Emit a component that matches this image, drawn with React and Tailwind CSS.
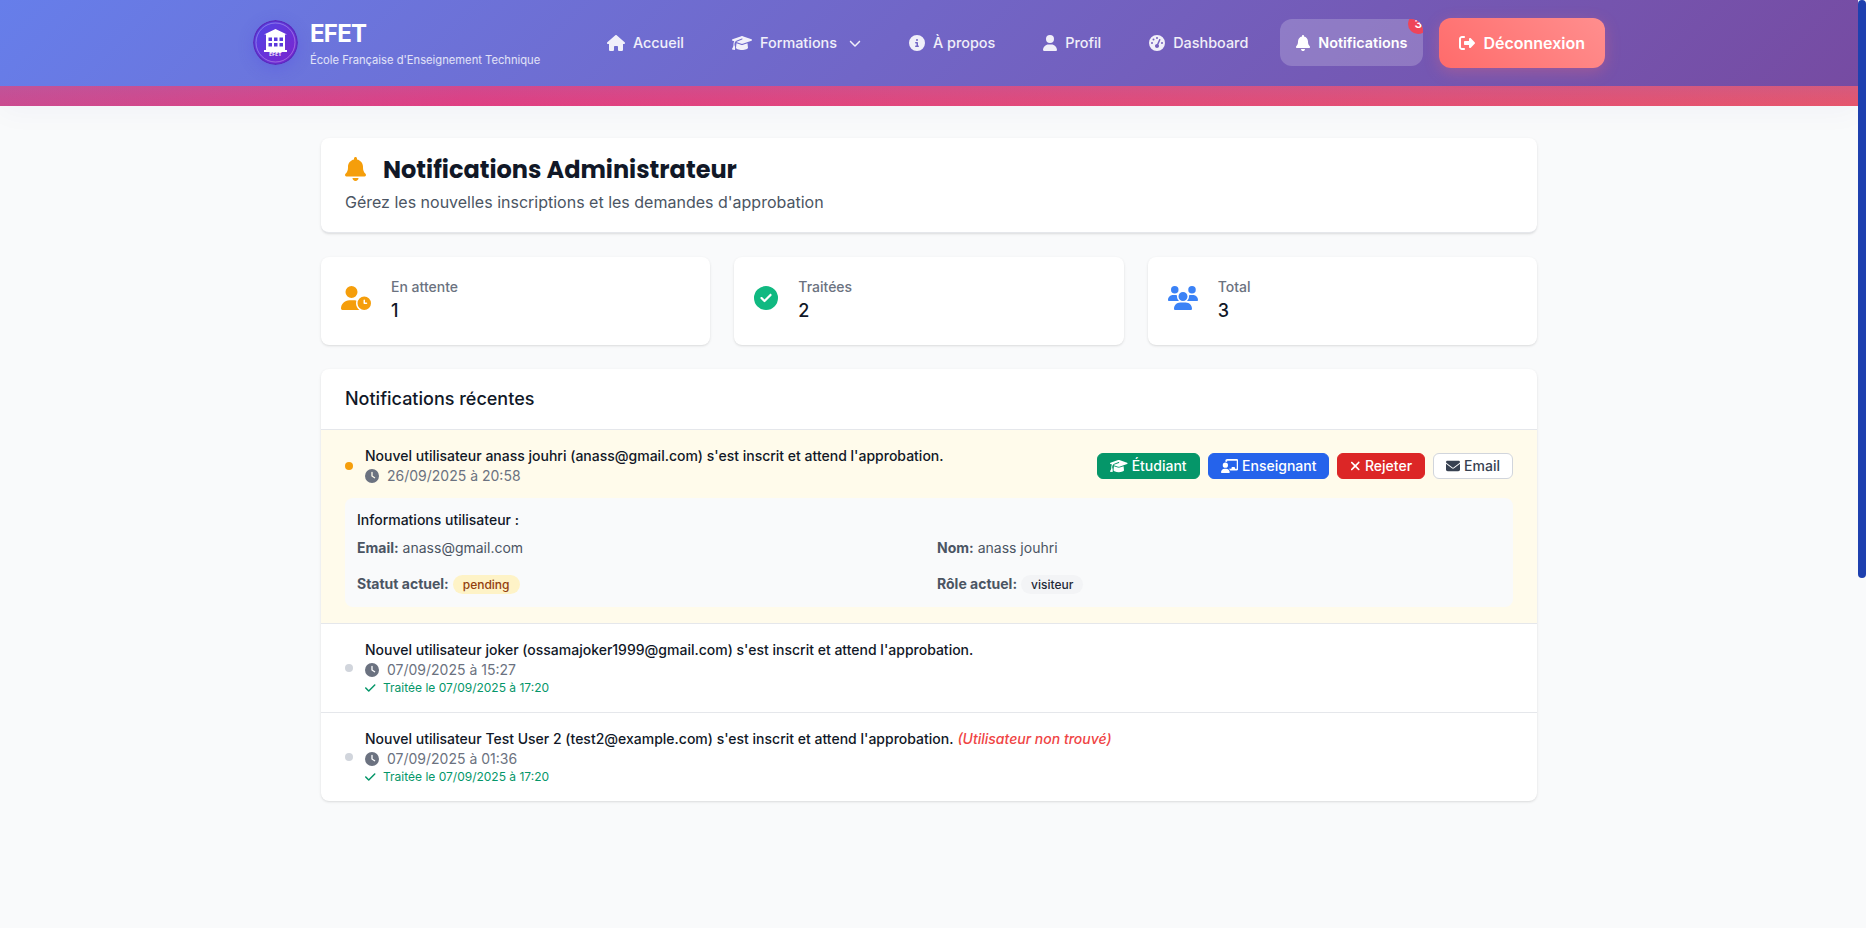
import {
  FaHouse, FaGraduationCap, FaCircleInfo, FaUser, FaBell, FaRightFromBracket,
  FaUserClock, FaCircleCheck, FaUsers, FaClock, FaCheck, FaXmark, FaEnvelope, FaChevronDown,
  FaChalkboardUser, FaGaugeHigh,
} from "react-icons/fa6";

function Logo() {
  return (
    <svg className="mb-px size-[45px] rounded-full shadow-[0_4px_15px_rgba(79,70,229,0.3)]" viewBox="0 0 45 45">
      <defs>
        <linearGradient id="lg" x1="0" y1="0" x2="1" y2="1">
          <stop offset="0" stopColor="#4f46e5" />
          <stop offset="1" stopColor="#7e22ce" />
        </linearGradient>
      </defs>
      <circle cx="22.5" cy="22.5" r="22.5" fill="#5b2bc0" />
      <circle cx="22.5" cy="22.5" r="21" fill="url(#lg)" />
      <circle cx="22.5" cy="22.5" r="19.5" fill="none" stroke="#fff" strokeOpacity=".3" strokeWidth="1" />
      <path fill="#fff" d="M22.5 9 L34 14.5 H32 V30 H34 V32 H11 V30 H13 V14.5 H11 Z" />
      <g fill="#5b39dc">
        <rect x="15.5" y="17.5" width="3.5" height="3.5" />
        <rect x="21" y="17.5" width="3.5" height="3.5" />
        <rect x="26.5" y="17.5" width="3.5" height="3.5" />
        <rect x="15.5" y="23" width="3.5" height="3.5" />
        <rect x="21" y="23" width="3.5" height="3.5" />
        <rect x="26.5" y="23" width="3.5" height="3.5" />
      </g>
      <text x="22.5" y="36.2" textAnchor="middle" fontSize="5" fontWeight="700" fill="#fff">EFET</text>
    </svg>
  );
}

function NavItem({ icon: Icon, size = "w-4", children, chevron }) {
  return (
    <a className="flex h-[47px] items-center gap-2 px-4 text-[14.4px] font-medium text-white/90">
      <Icon className={`h-4 shrink-0 ${size}`} />
      <span>{children}</span>
      {chevron && <FaChevronDown className="ml-1 size-3" />}
    </a>
  );
}

function Stat({ icon: Icon, color, label, value }) {
  return (
    <div className="flex h-22 items-center gap-5 rounded-lg bg-white px-5 shadow-sm">
      <Icon className={`mb-1.5 h-6 shrink-0 ${color}`} />
      <div>
        <div className="text-sm leading-5 font-medium text-[#6b7280]">{label}</div>
        <div className="text-lg leading-7 font-medium text-[#111827]">{value}</div>
      </div>
    </div>
  );
}

function Processed({ text, date, missing }) {
  return (
    <li className="flex h-[89px] items-center border-t border-gray-200 px-6">
      <span className="mr-3 size-2 rounded-full bg-gray-300" />
      <div>
        <p className="text-sm leading-5 font-medium">
          {text}
          {missing && <span className="ml-1 text-[#ef4444] italic">(Utilisateur non trouvé)</span>}
        </p>
        <p className="flex items-center gap-2 text-sm leading-5 text-[#6b7280]"><FaClock />{date}</p>
        <p className="flex items-center gap-[7.5px] text-xs leading-4 text-[#059669]"><FaCheck className="w-[10.5px]" />Traitée le 07/09/2025 à 17:20</p>
      </div>
    </li>
  );
}

function Action({ icon: Icon, size, color, children }) {
  return (
    <button className={`flex h-[26px] items-center gap-1 rounded-md border px-3 ${color}`}>
      <Icon className={`h-3.5 shrink-0 ${size}`} />
      {children}
    </button>
  );
}

export default function App() {
  return (
    <div className="flex h-screen bg-gray-50 font-['Inter',sans-serif] text-[#111827]">
      <div className="min-w-0 flex-1">
        <header className="shadow-[0_6px_28px_rgba(31,38,135,0.035)]">
          <div className="h-[86px] bg-linear-135 from-[#667eea] to-[#764ba2]">
            <div className="mx-auto flex h-full w-[1352px] items-center">
              <Logo />
              <div className="ml-3 pt-0.5">
                <div className="text-2xl leading-[29px] font-bold tracking-[-0.03em] text-white">EFET</div>
                <div className="mt-1 text-[11.2px] leading-[17px] text-white/80">École Française d'Enseignement Technique</div>
              </div>
              <nav className="ml-auto flex items-center gap-4">
                <NavItem icon={FaHouse} size="w-[18px]">Accueil</NavItem>
                <NavItem icon={FaGraduationCap} size="w-5" chevron>Formations</NavItem>
                <NavItem icon={FaCircleInfo}>À propos</NavItem>
                <NavItem icon={FaUser} size="w-3.5">Profil</NavItem>
                <NavItem icon={FaGaugeHigh}>Dashboard</NavItem>
                <a className="relative mb-px flex h-[47px] items-center gap-2 overflow-hidden rounded-xl bg-white/20 px-4 text-[14.4px] font-semibold text-white">
                  <FaBell className="h-4 w-3.5" />Notifications
                  <span className="absolute -top-[5px] -right-[5px] flex size-5 items-center justify-center rounded-full bg-[#ef4459] text-xs">3</span>
                </a>
                <a className="flex h-[50px] items-center gap-2 rounded-xl bg-linear-45 from-[#ff6b6b] to-[#ff8e8e] px-5 text-base font-semibold text-white shadow-[0_4px_15px_rgba(255,107,107,0.3)]">
                  <FaRightFromBracket /><span className="mb-px">Déconnexion</span>
                </a>
              </nav>
            </div>
          </div>
          <div className="h-5 bg-linear-to-r from-[#cb4b90] via-[#e03e82] via-25% to-[#e6556c]">
            <div className="h-full bg-linear-to-b from-[#a06bb4]/25 to-[#a06bb4]/0" />
          </div>
        </header>

        <main className="mx-auto mt-8 flex w-[1216px] flex-col gap-6">
          <section className="h-[95px] rounded-lg border-b border-gray-200 bg-white px-6 pt-4 shadow-sm">
            <h1 className="flex h-8 items-center gap-[17px] font-['Poppins','Inter',sans-serif] text-2xl font-bold">
              <FaBell className="mb-0.5 h-6 w-[21px] text-[#f59e0b]" />Notifications Administrateur
            </h1>
            <p className="mt-1 text-base text-[#4b5563]">Gérez les nouvelles inscriptions et les demandes d'approbation</p>
          </section>

          <section className="grid grid-cols-3 gap-6">
            <Stat icon={FaUserClock} color="w-[30px] text-[#f59e0b]" label="En attente" value="1" />
            <Stat icon={FaCircleCheck} color="w-6 text-[#10b981]" label="Traitées" value="2" />
            <Stat icon={FaUsers} color="w-[30px] text-[#3b82f6]" label="Total" value="3" />
          </section>

          <section className="overflow-hidden rounded-lg bg-white shadow-sm">
            <h2 className="flex h-[60px] items-center px-6 text-lg font-medium">Notifications récentes</h2>
            <ul>
              <li className="h-[194px] border-t border-gray-200 bg-[#fffbeb] px-6 pt-4">
                <div className="flex h-10 items-center">
                  <span className="mr-3 size-2 rounded-full bg-[#f59e0b]" />
                  <div>
                    <p className="text-sm leading-5 font-medium">Nouvel utilisateur anass jouhri (anass@gmail.com) s'est inscrit et attend l'approbation.</p>
                    <p className="flex items-center gap-2 text-sm leading-5 text-[#6b7280]"><FaClock />26/09/2025 à 20:58</p>
                  </div>
                  <div className="ml-auto flex gap-2 text-sm font-medium">
                    <Action icon={FaGraduationCap} size="w-[17.5px]" color="border-[#059669] bg-[#059669] text-white">Étudiant</Action>
                    <Action icon={FaChalkboardUser} size="w-[17.5px]" color="border-[#2563eb] bg-[#2563eb] text-white">Enseignant</Action>
                    <Action icon={FaXmark} size="w-[10.5px]" color="border-[#dc2626] bg-[#dc2626] text-white">Rejeter</Action>
                    <Action icon={FaEnvelope} size="w-3.5" color="border-gray-300 bg-white text-[#374151]">Email</Action>
                  </div>
                </div>
                <div className="mt-3 h-[109px] rounded-lg bg-gray-50 p-3 text-sm text-[#4b5563]">
                  <h3 className="font-medium text-[#111827]">Informations utilisateur :</h3>
                  <div className="mt-2 grid grid-cols-2 gap-4">
                    <div><strong>Email:</strong> anass@gmail.com</div>
                    <div><strong>Nom:</strong> anass jouhri</div>
                    <div><strong>Statut actuel:</strong> <span className="rounded-full bg-[#fef3c7] px-2.5 py-0.5 text-xs font-medium text-[#92400e]">pending</span></div>
                    <div><strong>Rôle actuel:</strong> <span className="rounded-full bg-gray-100 px-2.5 py-0.5 text-xs font-medium text-[#1f2937]">visiteur</span></div>
                  </div>
                </div>
              </li>
              <Processed text="Nouvel utilisateur joker (ossamajoker1999@gmail.com) s'est inscrit et attend l'approbation." date="07/09/2025 à 15:27" />
              <Processed text="Nouvel utilisateur Test User 2 (test2@example.com) s'est inscrit et attend l'approbation." date="07/09/2025 à 01:36" missing />
            </ul>
          </section>
        </main>
      </div>
      <div className="w-2 bg-gray-50">
        <div className="h-[578px] rounded bg-[#1e40af]" />
      </div>
    </div>
  );
}
